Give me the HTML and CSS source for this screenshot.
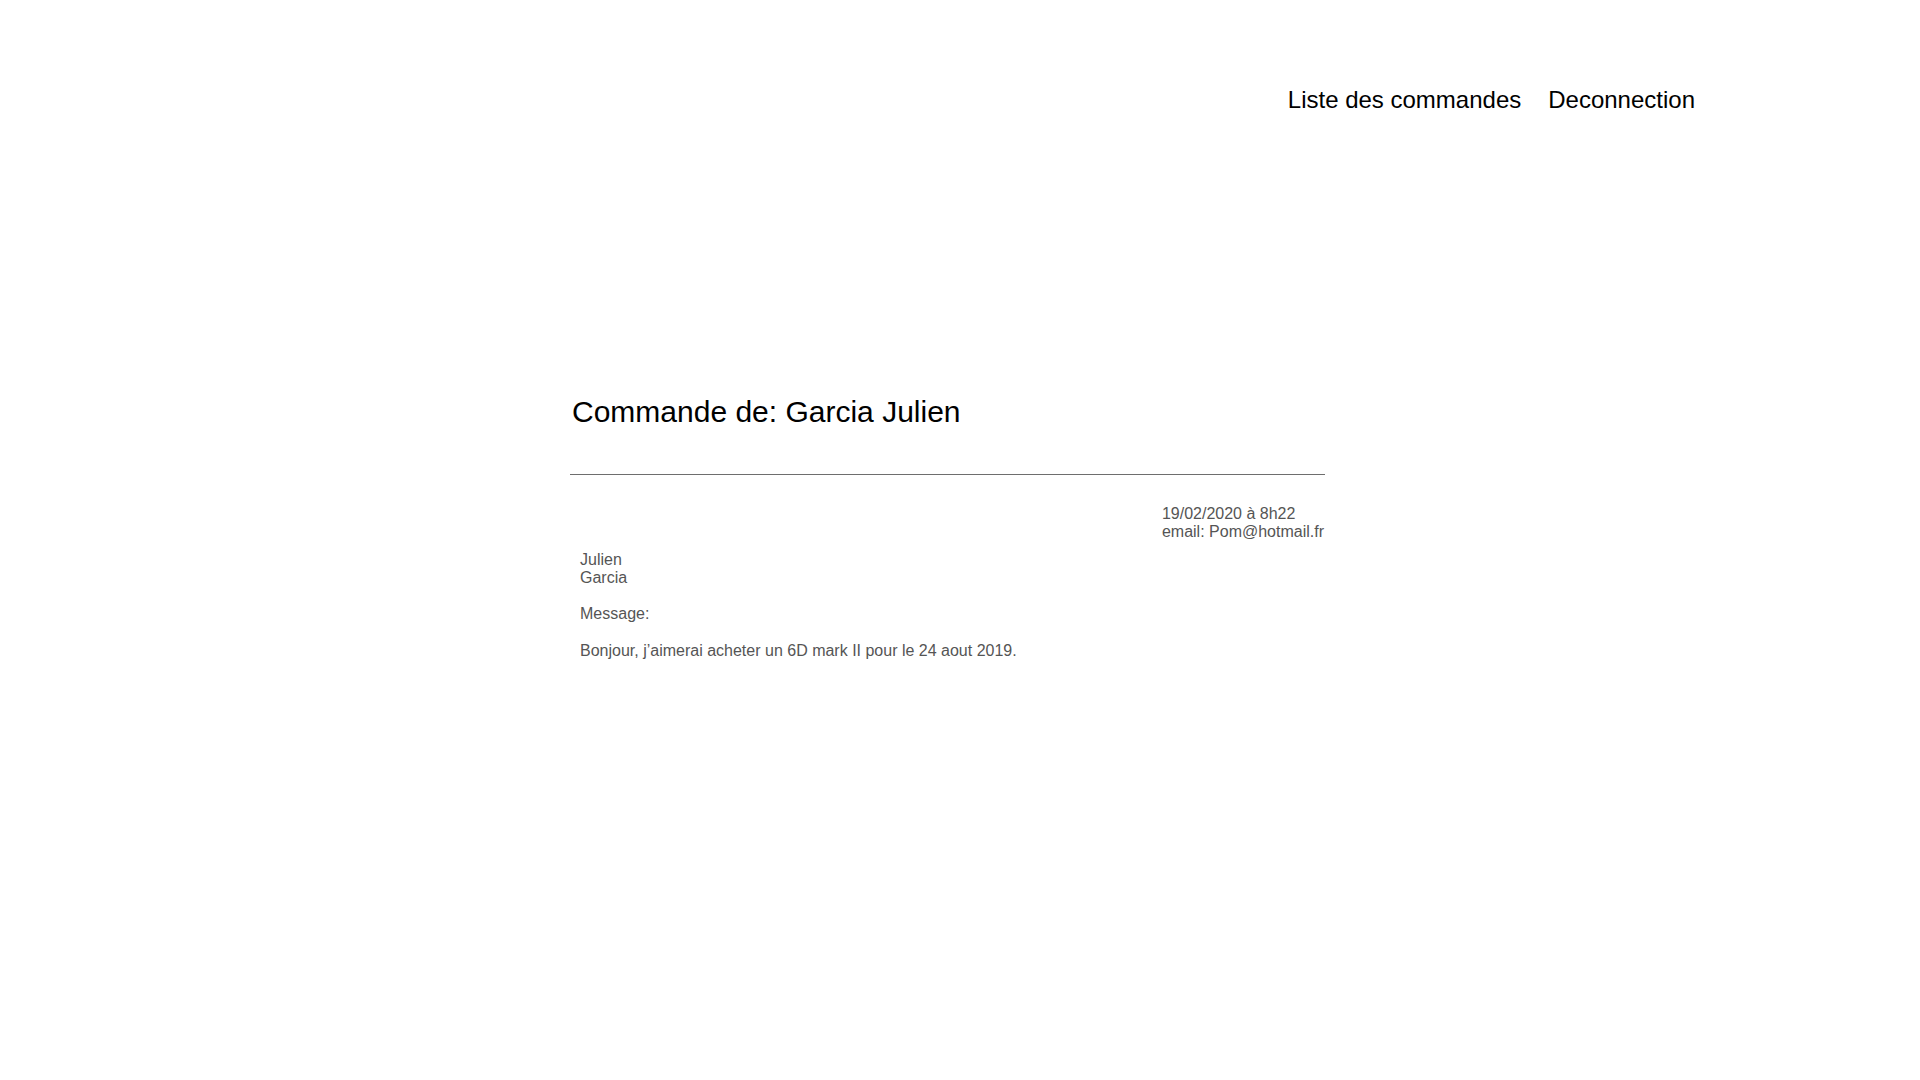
FILE: index.html
```html
<!DOCTYPE html>
<html lang="fr">
<head>
<meta charset="utf-8">
<title>Commande</title>
<link rel="stylesheet" href="styles.css">
</head>
<body>
<nav class="topnav">
  <a class="nav-link" href="#">Liste des commandes</a>
  <a class="nav-link" href="#">Deconnection</a>
</nav>
<main class="content">
  <h1 class="title">Commande de: Garcia Julien</h1>
  <hr class="sep">
  <div class="meta">
    <div class="meta-box">
      <div>19/02/2020 à 8h22</div>
      <div>email: Pom@hotmail.fr</div>
    </div>
  </div>
  <div class="details">
    <div class="name">
      <div>Julien</div>
      <div>Garcia</div>
    </div>
    <p class="label">Message:</p>
    <p class="message">Bonjour, j’aimerai acheter un 6D mark II pour le 24 aout 2019.</p>
  </div>
</main>
</body>
</html>
```

FILE: styles.css
```css
html, body {
  margin: 0;
  padding: 0;
  background: #fff;
}
body {
  font-family: "Liberation Sans", Arial, sans-serif;
  color: #000;
}
.topnav {
  display: flex;
  justify-content: flex-end;
  gap: 27px;
  padding: 86px 225px 0 0;
}
.nav-link {
  font-size: 24px;
  color: #000;
  text-decoration: none;
}
.content {
  width: 755px;
  margin: 0 0 0 570px;
  padding-top: 281px;
}
.title {
  font-size: 30px;
  font-weight: normal;
  margin: 0 0 0 2px;
  line-height: 34px;
}
.sep {
  border: 0;
  border-top: 1px solid #6e6e6e;
  margin: 45px 0 0 0;
  height: 0;
}
.meta {
  display: flex;
  justify-content: flex-end;
  margin: 30px 1px 0 0;
  color: #555;
  font-size: 16px;
  line-height: 18px;
}
.details {
  padding-left: 10px;
  color: #555;
  font-size: 16px;
  line-height: 18px;
  margin-top: 10px;
}
.name {
  margin: 0;
}
.label {
  margin: 18px 0 0 0;
}
.message {
  margin: 19px 0 0 0;
}
```
